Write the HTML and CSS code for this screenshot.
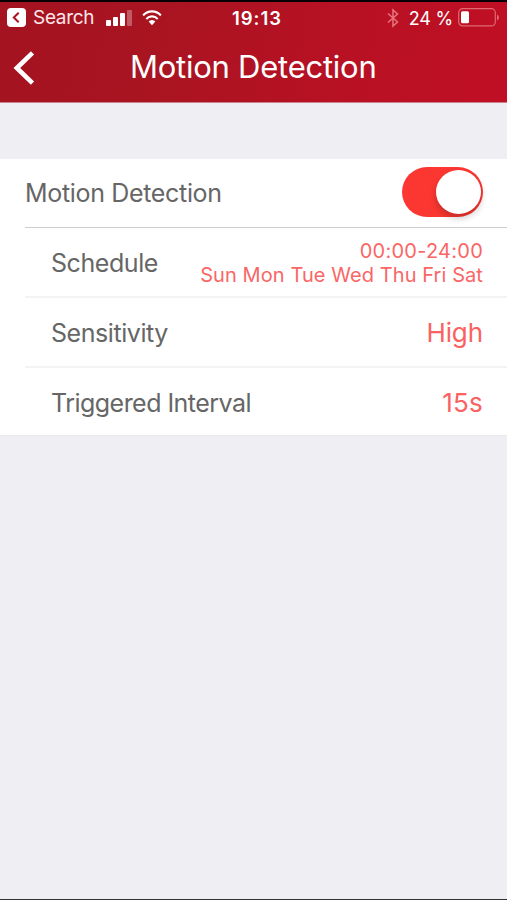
FILE: index.html
```html
<!DOCTYPE html>
<html lang="en">
<head>
<meta charset="utf-8">
<title>Motion Detection</title>
<link rel="stylesheet" href="styles.css">
</head>
<body>
<header class="header">
  <div class="status">
    <div class="status-left">
      <svg class="back-app" width="19" height="19" viewBox="0 0 19 19"><rect width="19" height="19" rx="4" fill="#fff"/><path d="M11.700 4.700 6.800 9.500l4.900 4.800" fill="none" stroke="#a91421" stroke-width="2"/></svg>
      <span class="search">Search</span>
      <svg class="signal" width="26" height="17" viewBox="0 0 26 17"><g fill="#fff"><rect x="0" y="10" width="5" height="6" rx="1"/><rect x="7" y="7" width="5" height="9" rx="1"/><rect x="14" y="3" width="5" height="13" rx="1"/><rect x="21" y="0" width="5" height="16" rx="1" opacity=".3"/></g></svg>
      <svg class="wifi" width="20" height="16" viewBox="0 0 22 16" preserveAspectRatio="none"><g fill="none" stroke="#fff" stroke-width="2.200"><path d="M1.200 5.400a14 14 0 0 1 19.600 0"/><path d="M4.700 9a9 9 0 0 1 12.600 0"/></g><path d="M7.300 11.600a5.200 5.200 0 0 1 7.400 0L11 15.300z" fill="#fff"/></svg>
    </div>
    <time class="clock">19:13</time>
    <div class="status-right">
      <svg class="bluetooth" width="12" height="20" viewBox="0 0 12 20"><path d="M1 5.500 10.500 14 6 18V2l4.500 4L1 14.500" fill="none" stroke="#e6747c" stroke-width="1.500"/></svg>
      <span class="percent">24 %</span>
      <svg class="battery" width="41" height="19" viewBox="0 0 41 19"><rect x=".7" y=".7" width="36.600" height="17.200" rx="4" fill="none" stroke="#df6873" stroke-width="1.200"/><rect x="3" y="3.300" width="8" height="12" rx="1.500" fill="#fff"/><path d="M39 6.500q2 .8 2 3t-2 3z" fill="#df6873"/></svg>
    </div>
  </div>
  <div class="nav">
    <svg class="back" width="22" height="34" viewBox="0 0 22 34"><path d="M19.500 1.800 3.800 17l15.700 15.200" fill="none" stroke="#fff" stroke-width="4.600"/></svg>
    <h1 class="title">Motion Detection</h1>
  </div>
</header>
<main class="settings">
  <div class="row row-main"><span class="label">Motion Detection</span><span class="toggle"><span class="knob"></span></span></div>
  <div class="row row-sub"><span class="label schedule">Schedule</span><span class="times"><span class="hours">00:00-24:00</span><span class="days">Sun Mon Tue Wed Thu Fri Sat</span></span></div>
  <div class="row row-sub"><span class="label sensitivity">Sensitivity</span><span class="value">High</span></div>
  <div class="row row-sub"><span class="label interval">Triggered Interval</span><span class="value seconds">15s</span></div>
</main>
</body>
</html>
```
FILE: styles.css
```css
* { box-sizing: border-box; }
body {
  display: flex;
  flex-direction: column;
  height: 900px;
  margin: 0;
  background: #eeeef3;
  border-bottom: 1px solid #303034;
  font-family: Inter, "Liberation Sans", sans-serif;
  white-space: nowrap;
}
svg { display: block; flex: none; }
.header {
  height: 103px;
  border-top: 2px solid #080000;
  border-bottom: 1px solid #c9828a;
  background: linear-gradient(100deg, #a41320 0%, #a91421 30%, #b81124 68%, #c00f24 100%);
  color: #fff;
}
.status {
  display: grid;
  grid-template-columns: 1fr auto 1fr;
  height: 31px;
  padding: 0 8px 0 7px;
  align-items: center;
}
.status-left, .status-right { display: flex; align-items: center; }
.status-right { justify-content: flex-end; }
.back-app { margin-top: -1px; }
.search { margin-left: 7px; font-size: 19px; letter-spacing: -.3px; color: #ffe6e9; }
.signal { margin: 1px 0 0 12px; }
.wifi { margin: 0 0 0 10px; }
.clock { padding: 1px 0 0 8px; font-size: 18.5px; font-weight: 600; letter-spacing: 1px; }
.percent { margin: 1px 5px 0 10px; font-size: 18px; letter-spacing: -.2px; }
.nav {
  display: grid;
  grid-template-columns: 130px 1fr 130px;
  align-items: center;
  height: 66px;
}
.back { margin: 4px 0 0 13px; }
.title { margin: 1px 0 0; font-size: 31px; font-weight: 400; letter-spacing: -.25px; line-height: 40px; }
.settings {
  margin-top: 56px;
  height: 277px;
  padding-left: 25px;
  background: #fff;
  border-bottom: 1px solid #e9e9ed;
}
.row { display: flex; justify-content: space-between; align-items: center; padding-right: 24px; }
.row-main { height: 69px; border-bottom: 1px solid #ceced1; }
.row-sub { height: 70px; padding: 2px 24px 0 26px; border-bottom: 2px solid #f3f3f5; }
.row-sub:last-child { height: 69px; padding-top: 0; border-bottom: 0; }
.label { color: #666; font-size: 25px; line-height: 32px; letter-spacing: -.33px; }
.schedule, .sensitivity { letter-spacing: -.43px; }
.interval { letter-spacing: -.53px; }
.toggle {
  display: flex;
  justify-content: flex-end;
  width: 81px;
  height: 50px;
  margin-top: -2px;
  padding: 3px 2px;
  border-radius: 25px;
  background: #fc3731;
}
.knob { width: 45px; height: 44px; border-radius: 50%; background: #fff; box-shadow: 0 4px 7px rgba(0, 0, 0, .22); }
.times { display: flex; flex-direction: column; align-items: flex-end; color: #fa6666; font-size: 20px; line-height: 24px; }
.hours { letter-spacing: .25px; }
.days { letter-spacing: .08px; }
.value { color: #fa6262; font-size: 26px; line-height: 32px; letter-spacing: -.1px; }
.seconds { letter-spacing: .2px; }
```
